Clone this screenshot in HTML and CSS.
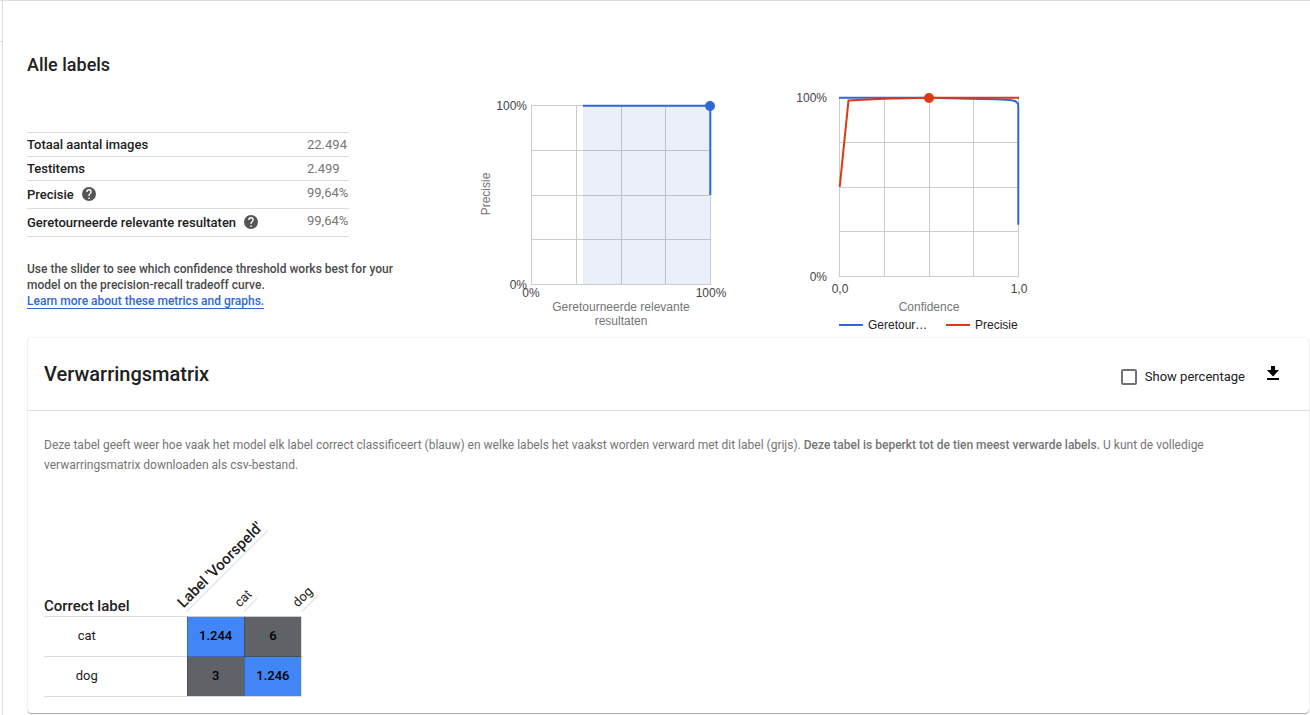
FILE: index.html
```html
<!DOCTYPE html>
<html lang="nl">
<head>
<meta charset="utf-8">
<meta name="viewport" content="width=device-width, initial-scale=1">
<title>Alle labels</title>
<link rel="stylesheet" href="styles.css">
</head>
<body>
<div class="app">
  <aside class="rail"><div class="rail-head"></div></aside>
  <main class="content">
    <section class="summary">
      <div class="metrics">
        <h1 class="page-title">Alle labels</h1>
        <table class="stats">
          <tbody>
            <tr><th scope="row">Totaal aantal images</th><td>22.494</td></tr>
            <tr><th scope="row">Testitems</th><td>2.499</td></tr>
            <tr class="tall"><th scope="row"><span class="stat-label">Precisie
              <button class="help" type="button" aria-label="Help"><svg viewBox="2 2 20 20" width="14" height="14"><path d="M12 2a10 10 0 1 0 0 20 10 10 0 0 0 0-20zm1 17h-2v-2h2v2zm2.07-7.75-.9.92C13.45 12.9 13 13.5 13 15h-2v-.5c0-1.1.45-2.1 1.17-2.83l1.24-1.26A2 2 0 1 0 10 9H8a4 4 0 1 1 8 0c0 .88-.36 1.68-.93 2.25z"/></svg></button></span></th><td>99,64%</td></tr>
            <tr class="tall"><th scope="row"><span class="stat-label">Geretourneerde relevante resultaten
              <button class="help" type="button" aria-label="Help"><svg viewBox="2 2 20 20" width="14" height="14"><path d="M12 2a10 10 0 1 0 0 20 10 10 0 0 0 0-20zm1 17h-2v-2h2v2zm2.07-7.75-.9.92C13.45 12.9 13 13.5 13 15h-2v-.5c0-1.1.45-2.1 1.17-2.83l1.24-1.26A2 2 0 1 0 10 9H8a4 4 0 1 1 8 0c0 .88-.36 1.68-.93 2.25z"/></svg></button></span></th><td>99,64%</td></tr>
          </tbody>
        </table>
        <p class="hint">Use the slider to see which confidence threshold works best for your model on the precision-recall tradeoff curve.<br><a class="link" href="#">Learn more about these metrics and graphs.</a></p>
      </div>
      <div class="charts">
        <svg class="chart" width="270" height="250" viewBox="0 0 270 250" role="img" aria-label="Precisie / Geretourneerde relevante resultaten">
          <path class="grid" d="M61.5 20v180M106.5 20v180M151.5 20v180M195.500 20v180M240.500 20v180M61 20.500h180M61 65.500h180M61 110.500h180M61 154.500h180M61 199.500h180"/>
          <path class="area" d="M113 20h127v179H113z"/>
          <path class="line blue" d="M113 20.700h127.300v89.300"/>
          <circle class="dot-blue" cx="240" cy="21" r="5"/>
          <g class="tick">
            <text x="57" y="25" text-anchor="end">100%</text>
            <text x="57" y="204" text-anchor="end">0%</text>
            <text x="61" y="212" text-anchor="middle">0%</text>
            <text x="241" y="212" text-anchor="middle">100%</text>
          </g>
          <g class="axis" text-anchor="middle">
            <text x="151" y="226">Geretourneerde relevante</text>
            <text x="151" y="240">resultaten</text>
            <text transform="translate(20 109) rotate(-90)">Precisie</text>
          </g>
        </svg>
        <svg class="chart" width="270" height="250" viewBox="0 0 270 250" role="img" aria-label="Confidence">
          <path class="grid" d="M59.500 12v180M104.500 12v180M149.500 12v180M193.500 12v180M238.500 12v180M59 12.500h180M59 57.500h180M59 102.500h180M59 146.500h180M59 191.500h180"/>
          <path class="line blue" d="M59 12.700h90l40 1 27 .5 14 .7 5 1 3 2.500.300 4v117.300"/>
          <path class="line red" d="M59.700 102l8.800-86.500L104 13.800l45-1.100h90"/>
          <circle class="dot-red" cx="149" cy="13" r="5"/>
          <g class="tick">
            <text x="47" y="17" text-anchor="end">100%</text>
            <text x="47" y="196" text-anchor="end">0%</text>
            <text x="60" y="208" text-anchor="middle">0,0</text>
            <text x="239" y="208" text-anchor="middle">1,0</text>
          </g>
          <text class="axis" x="149" y="226" text-anchor="middle">Confidence</text>
          <path class="line blue" d="M59 240h24"/>
          <path class="line red" d="M166 240h24"/>
          <g class="legend">
            <text x="88" y="244">Geretour…</text>
            <text x="195" y="244">Precisie</text>
          </g>
        </svg>
      </div>
    </section>
    <section class="card">
      <header class="card-head">
        <h2 class="card-title">Verwarringsmatrix</h2>
        <label class="check"><input type="checkbox">Show percentage</label>
        <button class="download" type="button" aria-label="Download"><svg width="12" height="14" viewBox="0 0 12 14"><path d="M4 0h4v4h4L6 10.500 0 4h4zM0 12h12v2H0z"/></svg></button>
      </header>
      <p class="desc">Deze tabel geeft weer hoe vaak het model elk label correct classificeert (blauw) en welke labels het vaakst worden verward met dit label (grijs). <b>Deze tabel is beperkt tot de tien meest verwarde labels.</b> U kunt de volledige verwarringsmatrix downloaden als csv-bestand.</p>
      <table class="matrix">
        <thead>
          <tr>
            <th class="corner">Correct label<span class="slant main">Label 'Voorspeld'</span></th>
            <th><span class="slant">cat</span></th>
            <th><span class="slant">dog</span></th>
          </tr>
        </thead>
        <tbody>
          <tr><th scope="row">cat</th><td class="hit">1.244</td><td class="miss">6</td></tr>
          <tr><th scope="row">dog</th><td class="miss">3</td><td class="hit">1.246</td></tr>
        </tbody>
      </table>
    </section>
  </main>
</div>
</body>
</html>
```
FILE: styles.css
```css
* { box-sizing: border-box; }
body {
  margin: 0;
  background: #fff;
  color: #000;
  font-family: Roboto, "Liberation Sans", sans-serif;
  font-size: 13px;
}
button { padding: 0; border: 0; background: none; cursor: pointer; }
svg { display: block; }

.app { display: flex; min-height: 100vh; border-top: 1px solid #dedede; }
.rail { flex: none; width: 3px; border-right: 1px solid #dedede; }
.rail-head { height: 41px; border-bottom: 1px solid #dedede; }
.content { flex: 1; min-width: 0; padding: 0 1px 1px 24px; }

.summary { display: flex; padding-bottom: 3px; }
.metrics { flex: none; width: 373px; padding-top: 52px; }
.page-title { margin: 0 0 55px; font-size: 18px; line-height: 24px; font-weight: 500; color: #212121; }

.stats { width: 322px; border-collapse: collapse; border-top: 1px solid #dedede; }
.stats tr { height: 24px; border-bottom: 1px solid #dedede; }
.stats .tall { height: 28px; }
.stats th, .stats td { padding: 0; line-height: 16px; text-align: left; }
.stats th { font-weight: 500; color: #212121; }
.stats td { width: 42px; color: #757575; }
.stats .tall td { padding-bottom: 3px; }
.stat-label { display: flex; align-items: center; gap: 8px; }
.help { padding-bottom: 2px; }
.help svg { fill: #555; }

.hint { margin: 24px 0 0; font-size: 12px; line-height: 16px; font-weight: 500; color: #4a4a4a; }
.link { color: #3367d6; text-decoration: none; border-bottom: 1px solid #3367d6; }

.charts { display: flex; gap: 40px; padding: 84px 0 0 70px; }
.chart { flex: none; font-family: "Liberation Sans", Arial, sans-serif; font-size: 12px; }
.grid { fill: none; stroke: #ccc; }
.area { fill: #3366cc; opacity: .1; }
.line { fill: none; stroke-width: 2; }
.blue { stroke: #3367d6; }
.red { stroke: #dc3912; }
.dot-blue { fill: #3367d6; }
.dot-red { fill: #dc3912; }
.tick { fill: #444; }
.axis { fill: #757575; }
.legend { fill: #222; }

.card {
  margin-left: 1px;
  padding-bottom: 16px;
  border-radius: 4px;
  box-shadow: 0 1px 1px rgba(0, 0, 0, .3), 0 0 2px rgba(0, 0, 0, .14);
}
.card-head {
  display: flex;
  align-items: center;
  height: 73px;
  padding: 0 30px 0 16px;
  border-bottom: 1px solid #dedede;
}
.card-title { flex: 1; margin: 0; font-size: 20px; line-height: 28px; font-weight: 500; color: #212121; }
.check { display: flex; align-items: center; gap: 8px; padding-top: 5px; color: #212121; }
.check input {
  appearance: none;
  width: 16px;
  height: 16px;
  margin: 0;
  border: 2px solid #737373;
  border-radius: 2px;
}
.download { margin: 0 0 2px 22px; }
.desc { margin: 24px 64px 0 16px; font-size: 12px; line-height: 20px; color: #757575; }
.desc b { font-weight: 500; }

.matrix { margin: 121px 0 0 16px; border-collapse: collapse; table-layout: fixed; width: 258px; }
.matrix th, .matrix td { height: 40px; padding: 0 0 2px; text-align: center; }
.matrix th { position: relative; font-weight: 400; color: #212121; }
.matrix tbody th { padding-right: 57px; }
.matrix thead th { height: 20px; padding: 0; }
.matrix .corner { width: 143px; font-size: 15px; line-height: 20px; font-weight: 500; text-align: left; }
.matrix tbody tr { border-top: 1px solid #dedede; border-bottom: 1px solid #dedede; }
.matrix td { border: 1px solid rgba(0, 0, 0, .2); font-weight: 500; }
.matrix td:last-child { border-right-color: #dedede; }
.matrix tr:last-child td { border-bottom-color: #dedede; }
.hit { background: #4285f4; }
.miss { background: #5f6368; }
.slant {
  position: absolute;
  left: 100%;
  bottom: 4px;
  padding-right: 2px;
  border-bottom: 1px solid #dedede;
  font-size: 13px;
  line-height: 18px;
  white-space: nowrap;
  transform: rotate(-45deg);
  transform-origin: 0 100%;
}
.slant.main { font-size: 15px; }
```
